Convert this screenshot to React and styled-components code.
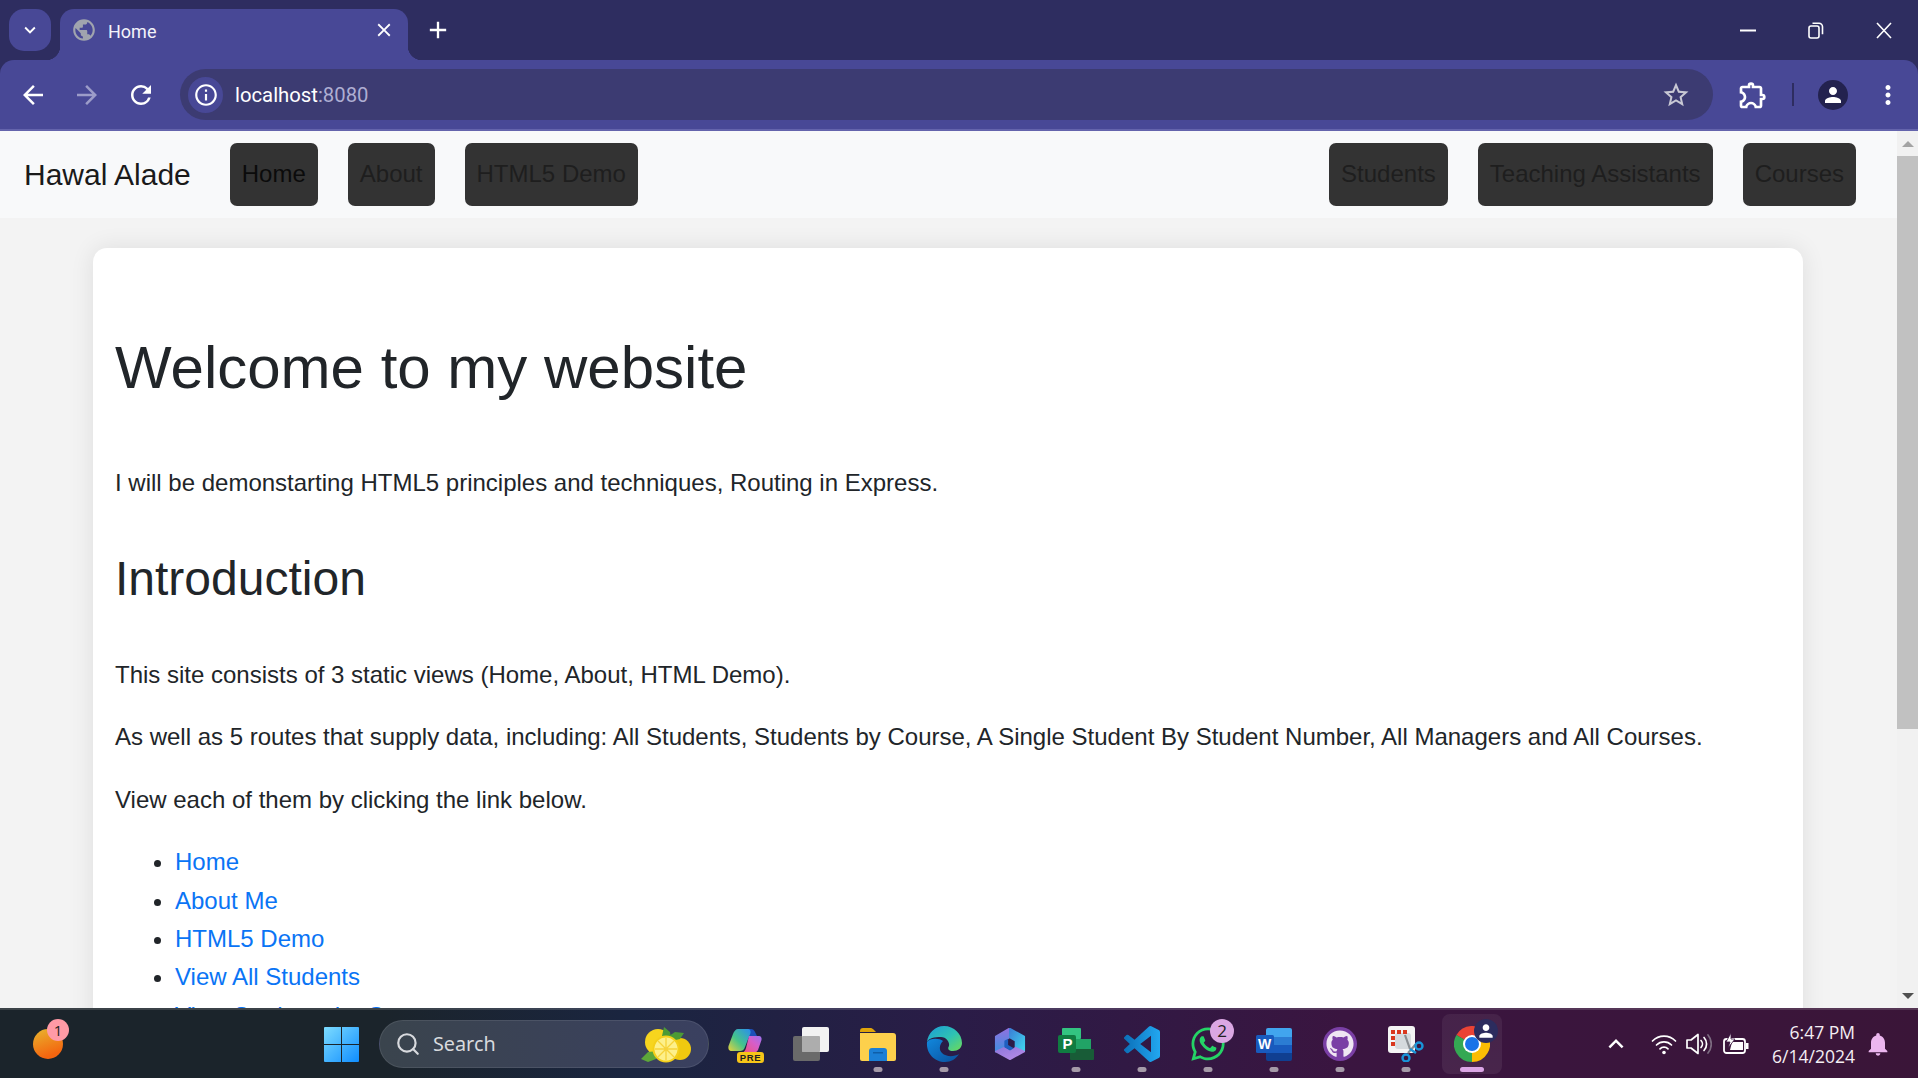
import React from "react";
import styled, { createGlobalStyle } from "styled-components";
import { MdArrowBack, MdArrowForward, MdRefresh, MdStarBorder, MdOutlineExtension, MdPerson, MdMoreVert, MdClose, MdAdd, MdKeyboardArrowDown, MdOutlineInfo, MdPublic, MdNotifications, MdKeyboardArrowUp } from "react-icons/md";
import { FaWhatsapp, FaGithub } from "react-icons/fa";
import { Search as LucideSearch } from "lucide-react";

const Global = createGlobalStyle`
  html, body { margin: 0; padding: 0; height: 100%; overflow: hidden; }
  * { box-sizing: border-box; }
  body { font-family: "Liberation Sans", Arial, sans-serif; }
`;

const Screen = styled.div`
  width: 1918px; height: 1078px; display: flex; flex-direction: column; overflow: hidden; background: #2e2d60;
`;
const TabStrip = styled.div`
  height: 60px; flex: none; display: flex; align-items: flex-end; padding-left: 9px; background: #2e2d60; color: #fff;
`;
const TabsMenu = styled.div`
  width: 42px; height: 42px; margin-bottom: 9px; border-radius: 15px; background: #484896; display: flex; align-items: center; justify-content: center; font-size: 22px;
`;
const Tab = styled.div`
  position: relative; width: 348px; height: 51px; margin-left: 9px; padding: 0 13px 9px 11px; background: #484896; border-radius: 14px 14px 0 0;
  display: flex; align-items: center; gap: 11px;
  &::before, &::after { content: ""; position: absolute; bottom: 0; width: 14px; height: 14px; }
  &::before { left: -14px; background: radial-gradient(circle at 0 0, transparent 14px, #484896 14.5px); }
  &::after { right: -14px; background: radial-gradient(circle at 100% 0, transparent 14px, #484896 14.5px); }
`;
const TabTitle = styled.span`
  flex: 1; font: 400 18px/24px Roboto, sans-serif; color: #f3f3fa; margin-top: 3px;
`;
const Favicon = styled(MdPublic)` font-size: 26px; color: #a0a4ae; `;
const TabClose = styled(MdClose)` font-size: 22px; color: #fff; `;
const NewTab = styled.div`
  width: 40px; height: 60px; margin-left: 10px; display: flex; align-items: center; justify-content: center; font-size: 28px;
`;
const WindowControls = styled.div`
  margin-left: auto; height: 60px; display: flex; align-items: center;
`;
const WindowButton = styled.div`
  width: 68px; height: 60px; display: flex; align-items: center; justify-content: center;
`;
const Toolbar = styled.div`
  height: 71px; flex: none; position: relative; background: #484896; border-radius: 14px 14px 0 0; border-bottom: 2px solid #6464ac;
  padding: 9px 0 9px 6px; display: flex; align-items: center; color: #fff;
`;
const NavIcon = styled.div`
  width: 54px; height: 40px; display: flex; align-items: center; justify-content: center; font-size: 30px; color: ${p => p.$dim ? "#9c9cc9" : "#fff"};
`;
const Omnibox = styled.div`
  width: 1533px; height: 51px; margin-left: 12px; border-radius: 26px; background: #3c3b72; display: flex; align-items: center; padding: 0 22px 0 8px;
`;
const InfoChip = styled.div`
  width: 35px; height: 36px; border-radius: 50%; background: #484896; display: flex; align-items: center; justify-content: center; font-size: 26px;
`;
const Url = styled.span`
  margin-left: 12px; flex: 1; font: 400 20.3px/28px Roboto, sans-serif; color: #fff;
  & > span { color: #aeaed2; }
`;
const ToolbarEnd = styled.div`
  flex: 1; display: flex; align-items: center; color: #fff;
`;
const ExtIcon = styled(MdOutlineExtension)` font-size: 32px; margin-left: 24px; `;
const ToolSep = styled.div` width: 2px; height: 23px; margin-left: 23px; background: #2e2d60; `;
const Avatar = styled.div`
  width: 30px; height: 30px; margin-left: 24px; border-radius: 50%; background: #23224f; display: flex; align-items: center; justify-content: center; font-size: 24px;
`;
const MenuIcon = styled(MdMoreVert)` font-size: 30px; margin-left: 25px; `;

const Viewport = styled.div`
  flex: 1; min-height: 0; display: flex; background: #f3f3f3;
`;
const Page = styled.div`
  flex: 1; min-width: 0; overflow: hidden; color: #212529; background: #f3f3f3;
`;
const Navbar = styled.nav`
  height: 87px; display: flex; align-items: center; padding: 0 41px 0 24px; background: #f8f9fa;
`;
const Brand = styled.span` font-size: 30px; line-height: 36px; color: #1a1a1a; margin-right: 39px; `;
const NavList = styled.div`
  display: flex; gap: 30px; margin-left: ${p => p.$end ? "auto" : "0"};
`;
const NavButton = styled.a`
  display: block; padding: 12px; font-size: 24px; line-height: 38.4px; background: #333; border-radius: 7px; color: ${p => p.$active ? "#0b0b0b" : "#1e1e1e"};
`;
const Card = styled.main`
  margin: 30px 94px 30px 93px; padding: 24px 22px 23px; background: #fff; border-radius: 14px; box-shadow: 0 0 24px rgba(0,0,0,.09); font-size: 24px; line-height: 38.4px;
`;
const H1 = styled.h1` font-size: 60px; font-weight: 400; line-height: 72px; margin: 60px 0; `;
const H2 = styled.h2` font-size: 48px; font-weight: 400; line-height: 57.6px; margin: 48px 0; `;
const P = styled.p` margin: 0 0 24px; `;
const Links = styled.ul` margin: 0; padding-left: 60px; `;
const Link = styled.a` color: #0a74f5; `;

const Scrollbar = styled.div`
  width: 21px; flex: none; background: #f1f1f1; display: flex; flex-direction: column; align-items: center; justify-content: flex-start;
`;
const Arrow = styled.div`
  width: 0; height: 0; border-left: 6px solid transparent; border-right: 6px solid transparent; margin-top: ${p => p.$down ? "auto" : "10px"}; margin-bottom: ${p => p.$down ? "9px" : "0"};
  ${p => p.$down ? "border-top: 6px solid #505050;" : "border-bottom: 6px solid #a3a3a3;"}
`;
const Thumb = styled.div` width: 21px; height: 573px; margin-top: 9px; background: #c1c1c1; `;

const Taskbar = styled.footer`
  height: 70px; flex: none; display: flex; align-items: center; border-top: 2px solid rgba(255,255,255,.14);
  background: linear-gradient(90deg, #1b242b 0%, #1b242b 20%, #1a2540 33%, #2a1c47 50%, #3a1540 70%, #3a1538 100%);
  color: #fff;
`;
const Weather = styled.div`
  position: relative; width: 30px; height: 30px; margin-left: 33px; border-radius: 50%; background: linear-gradient(160deg, #e8b52e, #f4650f 80%);
`;
const PinkBadge = styled.span`
  position: absolute; top: -10px; left: 14px; width: 22px; height: 22px; border-radius: 50%; background: #ff9aa6; color: #222; font: 400 15px/22px "Open Sans", sans-serif; text-align: center;
`;
const Start = styled.div` margin-left: 261px; width: 35px; height: 35px; flex: none; `;
const Search = styled.div`
  position: relative; width: 330px; height: 48px; margin-left: 20px; border-radius: 24px; background: linear-gradient(90deg, #3a444d, #3a4060 100%); border: 1.5px solid rgba(255,255,255,.09);
  display: flex; align-items: center; padding-left: 15px; color: #d8dade;
`;
const SearchText = styled.span` margin-left: 12px; font: 400 19.8px/24px "Noto Sans", sans-serif; `;
const Lemon = styled.svg` position: absolute; right: 15px; top: 5.500px; `;
const Pins = styled.div` display: flex; margin-left: 4px; `;
const Slot = styled.div`
  position: relative; width: 66px; height: 60px; display: flex; align-items: center; justify-content: center; border-radius: 8px;
  ${p => p.$active ? "background: linear-gradient(180deg, rgba(255,255,255,.06), rgba(255,255,255,.07)); width: 60px; margin: 0 3px;" : ""}
`;
const Dot = styled.span`
  position: absolute; bottom: 2px; left: 50%; transform: translateX(-50%); height: 5px; border-radius: 3px;
  width: ${p => p.$active ? "24px" : "9px"}; background: ${p => p.$active ? "#dca6e6" : "#a59aa8"};
`;
const CountBadge = styled.span`
  position: absolute; top: 5px; right: 7px; width: 24px; height: 24px; border-radius: 50%; background: #dba7e3; color: #222; font: 400 17px/24px "Open Sans", sans-serif; text-align: center;
`;
const ProfileBadge = styled.span`
  position: absolute; top: 5px; right: 4px; width: 24px; height: 24px; border-radius: 50%; background: #2c2c5e; color: #fff; display: flex; align-items: center; justify-content: center; font-size: 20px;
`;
const PreTag = styled.span`
  position: absolute; left: 24px; top: 38px; width: 27px; height: 11px; border-radius: 3px; background: #f7c518; color: #222; font: 700 9.500px/11px "Liberation Sans", sans-serif; letter-spacing: .6px; text-align: center;
`;
const CopilotMark = styled.svg` margin-bottom: 6px; margin-left: -2px; `;
const Tray = styled.div`
  margin-left: auto; display: flex; align-items: center; padding-right: 26px;
`;
const Chevron = styled(MdKeyboardArrowUp)` font-size: 30px; `;
const TrayIcon = styled.svg` margin-left: ${p => p.$gap}px; `;
const Clock = styled.div`
  margin-left: 23px; font: 400 17.500px/24px "Open Sans", sans-serif; text-align: right; color: #f4eef4;
`;
const Bell = styled(MdNotifications)` font-size: 28px; color: #ecb6ef; margin-left: 9px; `;
const GitRing = styled.div`
  width: 34px; height: 34px; border-radius: 50%; background: #7a3fa5; display: flex; align-items: center; justify-content: center;
`;

const RestoreIcon = () => (
  <svg width="16" height="17" viewBox="0 0 16 17" fill="none" stroke="#fff" strokeWidth="1.6">
    <rect x="1" y="4" width="10" height="12" rx="2" />
    <path d="M4.500 1.200h6.500a3.500 3.500 0 0 1 3.500 3.500v7.500" />
  </svg>
);
const MinIcon = () => <svg width="16" height="3"><rect width="16" height="2" y="0.5" fill="#fff" /></svg>;
const WinClose = () => (
  <svg width="16" height="17" stroke="#fff" strokeWidth="1.6"><path d="M1 1l14 15M15 1L1 16" /></svg>
);

const WinLogo = () => (
  <svg width="35" height="35" viewBox="0 0 35 35" style={{ display: "block" }}>
    <defs>
      <linearGradient id="wl" x1="0" y1="0" x2="1" y2="1">
        <stop offset="0" stopColor="#7ddcff" /><stop offset="1" stopColor="#0f8dff" />
      </linearGradient>
    </defs>
    <path fill="url(#wl)" d="M1 0h16v17H0V1a1 1 0 0 1 1-1zM18 0h16a1 1 0 0 1 1 1v16H18zM0 18h17v17H1a1 1 0 0 1-1-1zM18 18h17v16a1 1 0 0 1-1 1H18z" />
  </svg>
);
const LemonIcon = () => (
  <Lemon width="52" height="36" viewBox="0 0 52 36">
    <circle cx="17" cy="15" r="13" fill="#f7d51e" />
    <circle cx="39" cy="22" r="11" fill="#f0c90f" />
    <path d="M21 9l2-9 6 5 1 6zM28 9l6-4 9 1-4 6-9 2z" fill="#4b9a35" />
    <path d="M0 32l7-7 10-1-2 8-8 3z" fill="#5da63a" />
    <circle cx="25" cy="22" r="12.500" fill="#fdf08a" stroke="#f4cf1a" strokeWidth="2" />
    <g stroke="#f6d23a" strokeWidth="1.3"><path d="M25 11v22M14 22h22M17 14l16 16M33 14L17 30" /></g>
  </Lemon>
);
const Copilot = () => (
  <CopilotMark width="34" height="24" viewBox="0 0 34 24">
    <defs>
      <linearGradient id="cp1" x1="0" y1="1" x2="1" y2="0"><stop offset="0" stopColor="#e9d23c" /><stop offset=".45" stopColor="#45c48a" /><stop offset="1" stopColor="#2a8df0" /></linearGradient>
      <linearGradient id="cp2" x1="0" y1="1" x2="1" y2="0"><stop offset="0" stopColor="#f0527a" /><stop offset=".6" stopColor="#d65ec9" /><stop offset="1" stopColor="#9a72f0" /></linearGradient>
    </defs>
    <path fill="#1d4fb8" d="M18 0h5c2 0 3 1 4 3l3 6H20z" />
    <path fill="url(#cp1)" d="M10 0h10c2 0 3 2 2.500 4L17 18c-1 3-3 4-5 4H4c-3 0-4-2-3.500-5L5 5c1-3 3-5 5-5z" />
    <path fill="url(#cp2)" d="M21 7h10c2 0 3 2 2.500 4L30 21c-1 2-3 3-5 3H14c2-1 3-2 4-5z" />
  </CopilotMark>
);
const Squares = () => (
  <svg width="38" height="34" viewBox="0 0 38 34">
    <rect x="0" y="9" width="27" height="25" rx="2" fill="#6a6a6a" />
    <rect x="9" y="0" width="27" height="25" rx="2" fill="#f2f2f2" />
    <rect x="9" y="9" width="18" height="16" rx="1" fill="#adadad" />
  </svg>
);
const Folder = () => (
  <svg width="36" height="33" viewBox="0 0 36 33">
    <path fill="#e0a50a" d="M0 3a3 3 0 0 1 3-3h8c1 0 2 1 3 2l2 2h-16z" />
    <path fill="#fdd04c" d="M0 5h33a3 3 0 0 1 3 3v23a2 2 0 0 1-2 2H2a2 2 0 0 1-2-2z" />
    <path fill="#1b7fd6" d="M9 23a3 3 0 0 1 3-3h12a3 3 0 0 1 3 3v10H9z" />
    <rect x="13" y="24" width="10" height="1.500" fill="#0f5ea8" />
  </svg>
);
const Edge = () => (
  <svg width="36" height="36" viewBox="0 0 36 36">
    <defs>
      <linearGradient id="ed1" x1="0" y1="0" x2="1" y2="1"><stop offset="0" stopColor="#1b9bd8" /><stop offset=".55" stopColor="#2fc2b2" /><stop offset="1" stopColor="#6edb58" /></linearGradient>
      <linearGradient id="ed2" x1="0" y1="0" x2="1" y2="1"><stop offset="0" stopColor="#1188dd" /><stop offset="1" stopColor="#0a4f9c" /></linearGradient>
    </defs>
    <path fill="url(#ed1)" d="M1 16C2 7 9 0 18 0c10 0 18 8 18 17 0 5-4 8-9 8-4 0-6-2-4-5 1-4-3-9-8-9-7 0-12 1-14 5z" />
    <path fill="url(#ed2)" d="M1 16C0 28 9 36 19 36c6 0 11-3 14-8-5 3-13 3-17-1-3-3-3-8 1-12-4-3-13-3-16 1z" />
  </svg>
);
const M365 = () => (
  <svg width="32" height="34" viewBox="-1 -1 34 36" strokeLinejoin="round" strokeWidth="2">
    <defs>
      <linearGradient id="m1" x1="0" y1="0" x2="1" y2="1"><stop offset="0" stopColor="#3a7fd6" /><stop offset="1" stopColor="#40d4ee" /></linearGradient>
      <linearGradient id="m2" x1="0" y1="0" x2="0" y2="1"><stop offset="0" stopColor="#8f72e0" /><stop offset="1" stopColor="#3f8fe0" /></linearGradient>
      <linearGradient id="m3" x1="0" y1="0" x2="1" y2="1"><stop offset="0" stopColor="#8f78dc" /><stop offset="1" stopColor="#b88ce8" /></linearGradient>
    </defs>
    <path fill="url(#m2)" stroke="url(#m2)" d="M15 1L1 9v16l9-4.500v-7L15 10z" />
    <path fill="url(#m1)" stroke="url(#m1)" d="M16 1l15 8v15l-9-3.500v-7L16 10z" />
    <path fill="url(#m3)" stroke="url(#m3)" d="M31 25L16 33 1 25l9-4 6 3.500 6-3.500z" />
    <path fill="#1f5fc0" d="M10 13.500v7l6 3.500 4-2.500-6-3.500v-6.500z" />
  </svg>
);
const Project = () => (
  <svg width="36" height="32" viewBox="0 0 36 32">
    <rect x="4" y="0" width="19" height="11" rx="1" fill="#33c481" />
    <rect x="4" y="11" width="29" height="11" fill="#21a366" />
    <rect x="12" y="21" width="24" height="11" rx="1" fill="#185c37" />
    <rect x="0" y="7" width="18" height="18" rx="2" fill="#107c41" />
    <text x="4.500" y="21" fontFamily="Liberation Sans" fontWeight="700" fontSize="15" fill="#fff">P</text>
  </svg>
);
const VSCode = () => (
  <svg width="36" height="36" viewBox="0 0 24 24">
    <defs><linearGradient id="vs" x1="0" y1="0" x2="1" y2="0"><stop offset="0" stopColor="#0b6fb8" /><stop offset="1" stopColor="#22a7f0" /></linearGradient></defs>
    <path fill="url(#vs)" d="M23.150 2.587L18.210.21a1.494 1.494 0 0 0-1.705.29l-9.460 8.630-4.120-3.128a.999.999 0 0 0-1.276.057L.327 7.261A1 1 0 0 0 .326 8.740L3.899 12 .326 15.260a1 1 0 0 0 .001 1.479L1.650 17.940a.999.999 0 0 0 1.276.057l4.120-3.128 9.460 8.630a1.492 1.492 0 0 0 1.704.29l4.942-2.377A1.500 1.500 0 0 0 24 20.060V3.939a1.500 1.500 0 0 0-.85-1.352zm-5.146 14.861L10.826 12l7.178-5.448v10.896z" />
  </svg>
);
const Word = () => (
  <svg width="36" height="33" viewBox="0 0 36 33">
    <path fill="#41a5ee" d="M10 2a2 2 0 0 1 2-2h22a2 2 0 0 1 2 2v7H10z" />
    <rect x="10" y="9" width="26" height="8" fill="#2b7cd3" />
    <rect x="10" y="17" width="26" height="8" fill="#185abd" />
    <path fill="#103f91" d="M10 25h26v6a2 2 0 0 1-2 2H12a2 2 0 0 1-2-2z" />
    <rect x="0" y="7" width="18" height="18" rx="1.500" fill="#185abd" />
    <text x="2" y="21" fontFamily="Liberation Sans" fontWeight="700" fontSize="14" fill="#fff">W</text>
  </svg>
);
const GitHub = () => (
  <GitRing><FaGithub size={28} color="#efe6f3" /></GitRing>
);
const Snip = () => (
  <svg width="36" height="36" viewBox="0 0 36 36">
    <rect x="0" y="0" width="27" height="27" rx="3" fill="#f4f4f4" />
    <rect x="7" y="7" width="16" height="16" rx="3" fill="#d5dadd" />
    <g fill="#d9381e">
      <rect x="3" y="4" width="4" height="4" /><rect x="9" y="4" width="4" height="4" /><rect x="15" y="4" width="4" height="4" />
      <rect x="3" y="10" width="4" height="4" /><rect x="3" y="16" width="4" height="4" />
    </g>
    <path d="M17 9l5 14M28 18l-8 9" stroke="#8a8f93" strokeWidth="2.200" fill="none" />
    <circle cx="31" cy="20" r="3.500" fill="none" stroke="#1994d8" strokeWidth="2.400" />
    <circle cx="18" cy="32" r="3.500" fill="none" stroke="#1994d8" strokeWidth="2.400" />
    <path d="M22 23l6 4" stroke="#1994d8" strokeWidth="2.400" />
  </svg>
);
const Chrome = () => (
  <svg width="36" height="36" viewBox="0 0 36 36">
    <path fill="#ea4335" d="M18 18L2.400 9A18 18 0 0 1 33.600 9z" />
    <path fill="#fbbc04" d="M18 18L33.600 9A18 18 0 0 1 18 36z" />
    <path fill="#34a853" d="M18 18L18 36A18 18 0 0 1 2.400 9z" />
    <circle cx="18" cy="18" r="9" fill="#fff" />
    <circle cx="18" cy="18" r="7" fill="#1a73e8" />
  </svg>
);
const Wifi = () => (
  <TrayIcon $gap={20} width="26" height="22" viewBox="0 0 26 22" fill="none" stroke="#fff" strokeWidth="1.700" strokeLinecap="round">
    <path d="M1.500 8a16 16 0 0 1 23 0M5.500 12a10.500 10.500 0 0 1 15 0M9 15.800a5.500 5.500 0 0 1 8 0" />
    <circle cx="13" cy="19.500" r="1.800" fill="#fff" stroke="none" />
  </TrayIcon>
);
const Speaker = () => (
  <TrayIcon $gap={9} width="26" height="24" viewBox="0 0 26 24" fill="none" stroke="#fff" strokeWidth="1.700" strokeLinejoin="round" strokeLinecap="round">
    <path d="M1 8h4l7-5.500v19l-7-5.500H1z" />
    <path d="M15 8.500a5 5 0 0 1 0 7M18 5.500a9.500 9.500 0 0 1 0 13" />
    <path d="M22 3a14 14 0 0 1 0 18" stroke="#7c6a80" />
  </TrayIcon>
);
const Battery = () => (
  <TrayIcon $gap={11} width="26" height="22" viewBox="0 0 26 22" fill="none">
    <rect x="1" y="6" width="21" height="14" rx="2.500" stroke="#fff" strokeWidth="1.800" />
    <rect x="23" y="10" width="2.500" height="6" fill="#fff" />
    <path d="M7 17l2-8h11v8z" fill="#fff" />
    <path d="M8 0L3 9h4l-2 6 7-9H8z" fill="#fff" stroke="#3a1540" strokeWidth=".8" />
  </TrayIcon>
);

const App = () => (
  <Screen>
    <Global />
    <TabStrip>
      <TabsMenu><MdKeyboardArrowDown /></TabsMenu>
      <Tab>
        <Favicon />
        <TabTitle>Home</TabTitle>
        <TabClose />
      </Tab>
      <NewTab><MdAdd /></NewTab>
      <WindowControls>
        <WindowButton><MinIcon /></WindowButton>
        <WindowButton><RestoreIcon /></WindowButton>
        <WindowButton><WinClose /></WindowButton>
      </WindowControls>
    </TabStrip>
    <Toolbar>
      <NavIcon><MdArrowBack /></NavIcon>
      <NavIcon $dim><MdArrowForward /></NavIcon>
      <NavIcon><MdRefresh /></NavIcon>
      <Omnibox>
        <InfoChip><MdOutlineInfo /></InfoChip>
        <Url>localhost<span>:8080</span></Url>
        <MdStarBorder size={30} color="#c8c8d4" />
      </Omnibox>
      <ToolbarEnd>
        <ExtIcon />
        <ToolSep />
        <Avatar><MdPerson /></Avatar>
        <MenuIcon />
      </ToolbarEnd>
    </Toolbar>
    <Viewport>
      <Page>
        <Navbar>
          <Brand>Hawal Alade</Brand>
          <NavList>
            <NavButton $active>Home</NavButton>
            <NavButton>About</NavButton>
            <NavButton>HTML5 Demo</NavButton>
          </NavList>
          <NavList $end>
            <NavButton>Students</NavButton>
            <NavButton>Teaching Assistants</NavButton>
            <NavButton>Courses</NavButton>
          </NavList>
        </Navbar>
        <Card>
          <H1>Welcome to my website</H1>
          <P>I will be demonstarting HTML5 principles and techniques, Routing in Express.</P>
          <H2>Introduction</H2>
          <P>This site consists of 3 static views (Home, About, HTML Demo).</P>
          <P>As well as 5 routes that supply data, including: All Students, Students by Course, A Single Student By Student Number, All Managers and All Courses.</P>
          <P>View each of them by clicking the link below.</P>
          <Links>
            <li><Link>Home</Link></li>
            <li><Link>About Me</Link></li>
            <li><Link>HTML5 Demo</Link></li>
            <li><Link>View All Students</Link></li>
            <li><Link>View Students by Course</Link></li>
          </Links>
        </Card>
      </Page>
      <Scrollbar>
        <Arrow />
        <Thumb />
        <Arrow $down />
      </Scrollbar>
    </Viewport>
    <Taskbar>
      <Weather><PinkBadge>1</PinkBadge></Weather>
      <Start><WinLogo /></Start>
      <Search>
        <LucideSearch size={26} strokeWidth={2} />
        <SearchText>Search</SearchText>
        <LemonIcon />
      </Search>
      <Pins>
        <Slot><Copilot /><PreTag>PRE</PreTag></Slot>
        <Slot><Squares /></Slot>
        <Slot><Folder /><Dot /></Slot>
        <Slot><Edge /><Dot /></Slot>
        <Slot><M365 /></Slot>
        <Slot><Project /><Dot /></Slot>
        <Slot><VSCode /><Dot /></Slot>
        <Slot><FaWhatsapp size={38} color="#25d366" /><CountBadge>2</CountBadge><Dot /></Slot>
        <Slot><Word /><Dot /></Slot>
        <Slot><GitHub /><Dot /></Slot>
        <Slot><Snip /><Dot /></Slot>
        <Slot $active><Chrome /><ProfileBadge><MdPerson /></ProfileBadge><Dot $active /></Slot>
      </Pins>
      <Tray>
        <Chevron />
        <Wifi />
        <Speaker />
        <Battery />
        <Clock>6:47 PM<br />6/14/2024</Clock>
        <Bell />
      </Tray>
    </Taskbar>
  </Screen>
);

export default App;
